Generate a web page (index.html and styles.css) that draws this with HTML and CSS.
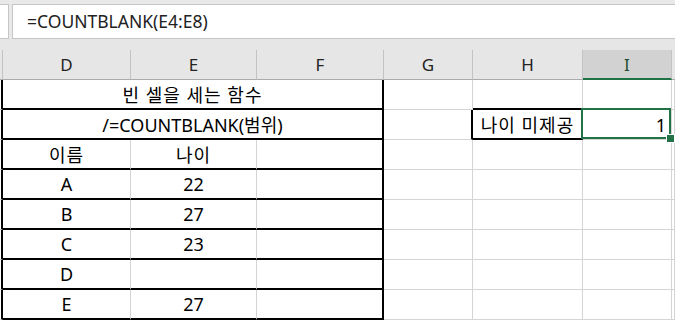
FILE: index.html
```html
<!DOCTYPE html>
<html lang="ko">
<head>
<meta charset="utf-8">
<link rel="stylesheet" href="styles.css">
</head>
<body>
<div class="app">
  <div class="formula-bar">
    <div class="namebox"></div>
    <div class="formula-input">=COUNTBLANK(E4:E8)</div>
  </div>
  <div class="sheet">
    <div class="hdr"></div>
    <div class="hdr">D</div>
    <div class="hdr">E</div>
    <div class="hdr">F</div>
    <div class="hdr">G</div>
    <div class="hdr">H</div>
    <div class="hdr sel">I</div>
    <div class="hdr last"></div>

    <!-- row: title -->
    <div class="c edge"></div>
    <div class="c span3 tb tr ko">빈 셀을 세는 함수</div>
    <div class="c"></div>
    <div class="c tb"></div>
    <div class="c"></div>
    <div class="c"></div>

    <!-- row: syntax -->
    <div class="c edge"></div>
    <div class="c span3 tb tr">/=COUNTBLANK(범위)</div>
    <div class="c tr"></div>
    <div class="c tb ko">나이 미제공</div>
    <div class="c num active">1</div>
    <div class="c"></div>

    <!-- row: headers -->
    <div class="c edge"></div>
    <div class="c tb ko">이름</div>
    <div class="c tb ko">나이</div>
    <div class="c tb tr"></div>
    <div class="c"></div>
    <div class="c"></div>
    <div class="c"></div>
    <div class="c"></div>

    <div class="c edge"></div>
    <div class="c tb">A</div>
    <div class="c tb">22</div>
    <div class="c tb tr"></div>
    <div class="c"></div>
    <div class="c"></div>
    <div class="c"></div>
    <div class="c"></div>

    <div class="c edge"></div>
    <div class="c tb">B</div>
    <div class="c tb">27</div>
    <div class="c tb tr"></div>
    <div class="c"></div>
    <div class="c"></div>
    <div class="c"></div>
    <div class="c"></div>

    <div class="c edge"></div>
    <div class="c tb">C</div>
    <div class="c tb">23</div>
    <div class="c tb tr"></div>
    <div class="c"></div>
    <div class="c"></div>
    <div class="c"></div>
    <div class="c"></div>

    <div class="c edge"></div>
    <div class="c tb">D</div>
    <div class="c tb"></div>
    <div class="c tb tr"></div>
    <div class="c"></div>
    <div class="c"></div>
    <div class="c"></div>
    <div class="c"></div>

    <div class="c edge"></div>
    <div class="c tb">E</div>
    <div class="c tb">27</div>
    <div class="c tb tr"></div>
    <div class="c"></div>
    <div class="c"></div>
    <div class="c"></div>
    <div class="c"></div>
  </div>
</div>
</body>
</html>
```

FILE: styles.css
```css
* { box-sizing: border-box; }
html, body {
  margin: 0;
  padding: 0;
  background: #ffffff;
  overflow: hidden;
}
.app {
  width: 675px;
  height: 321px;
  font-family: "Noto Sans", "Noto Sans CJK KR", sans-serif;
  color: #000;
}
.formula-bar {
  display: flex;
  gap: 3px;
  height: 39px;
  padding-top: 4px;
  background: #e9e9e9;
}
.namebox {
  width: 9px;
  height: 35px;
  background: #fff;
  border-top: 1px solid #c6c6c6;
  border-bottom: 1px solid #c6c6c6;
  border-right: 1px solid #c6c6c6;
}
.formula-input {
  flex: 1;
  height: 35px;
  background: #fff;
  border-top: 1px solid #c6c6c6;
  border-bottom: 1px solid #c6c6c6;
  border-left: 1px solid #c6c6c6;
  padding-left: 14px;
  font-size: 17.5px;
  line-height: 32px;
  color: #222;
}
.sheet {
  display: grid;
  grid-template-columns: 3px 128px 126px 127px 89px 110px 89px 1fr;
  grid-template-rows: 41px repeat(8, 30px);
  background: #fff;
}
.hdr {
  margin-top: 11px;
  height: 30px;
  background: #e6e6e6;
  border-right: 1px solid #c3c3c3;
  border-bottom: 1px solid #ababab;
  display: flex;
  align-items: center;
  justify-content: center;
  font-size: 17px;
  color: #222;
  box-shadow: 0 -11px 0 #e6e6e6;
}
.hdr.sel {
  background: #d2d2d2;
  border-bottom: 2px solid #217346;
  color: #1f4f33;
}
.hdr.last { border-right: none; }
.c {
  height: 30px;
  border-right: 1px solid #d4d4d4;
  border-bottom: 1px solid #d4d4d4;
  display: flex;
  align-items: center;
  justify-content: center;
  font-size: 18px;
  white-space: nowrap;
}
.c.ko { letter-spacing: 1px; }
.c.edge { border-right: 2px solid #000; }
.c.span3 { grid-column: span 3; }
.c.tb { border-bottom: 2px solid #000; }
.c.tr { border-right: 2px solid #000; }
.c.num { justify-content: flex-end; padding-right: 5px; }
.c.active { position: relative; }
.c.active::after {
  content: "";
  position: absolute;
  top: -2px;
  left: -2px;
  right: 0;
  bottom: 0;
  border: 2px solid #217346;
}
.c.active::before {
  content: "";
  position: absolute;
  right: -4px;
  bottom: -4px;
  width: 7px;
  height: 7px;
  background: #217346;
  border: 1px solid #fff;
  z-index: 2;
}
```
